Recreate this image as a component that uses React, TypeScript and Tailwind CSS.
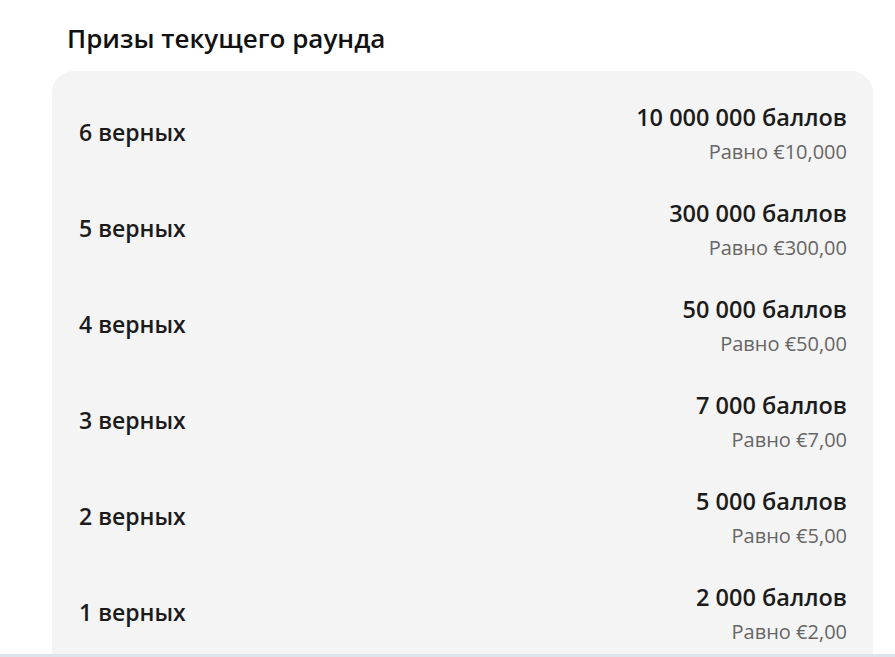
const prizes = [
  { hits: 6, points: "10 000 000", eur: "€10,000" },
  { hits: 5, points: "300 000", eur: "€300,00" },
  { hits: 4, points: "50 000", eur: "€50,00" },
  { hits: 3, points: "7 000", eur: "€7,00" },
  { hits: 2, points: "5 000", eur: "€5,00" },
  { hits: 1, points: "2 000", eur: "€2,00" },
]

export default function App() {
  return (
    <div className="relative h-[657px] w-[895px] overflow-hidden bg-white font-['Open_Sans',sans-serif] text-[#1b1b1b]">
      <div className="ml-[52px] w-[821px] pt-[18px]">
        <h2 className="pl-[15px] text-[26px] font-semibold leading-[40px] text-[#111]">Призы текущего раунда</h2>
        <div className="mt-[13px] rounded-[22px] bg-[#f4f4f4] pl-[27px] pr-[26px] pt-[15px] pb-[20px]">
          {prizes.map((p) => (
            <div key={p.hits} className="flex h-[96px] items-center justify-between">
              <span className="mb-[4px] text-[23px] font-semibold leading-[28px]">{p.hits} верных</span>
              <div className="flex flex-col items-end">
                <span className="text-[23.5px] font-semibold leading-[28px]">{p.points} баллов</span>
                <span className="mt-[8px] text-[20px] leading-[26px] text-[#666]">Равно {p.eur}</span>
              </div>
            </div>
          ))}
        </div>
      </div>
      <div className="absolute bottom-0 left-0 h-[3px] w-full bg-[#dfe4ea]" />
    </div>
  )
}
